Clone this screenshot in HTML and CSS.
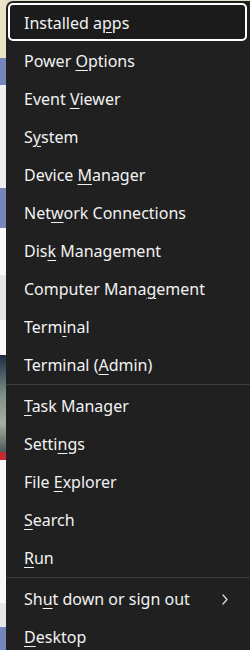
FILE: index.html
```html
<!DOCTYPE html>
<html lang="en">
<head>
    <meta charset="UTF-8">
    <meta name="viewport" content="width=device-width, initial-scale=1.0">
    <title>Quick Link Menu</title>
    <link rel="stylesheet" href="styles.css">
</head>
<body>
    <!-- bit of the desktop that shows left of the menu -->
    <div class="desktop">
        <div class="seg beige"></div>
        <div class="seg blue h27"></div>
        <div class="seg light h103"></div>
        <div class="seg blue h40"></div>
        <div class="seg white h47"></div>
        <div class="seg grey h45"></div>
        <div class="seg white h35"></div>
        <div class="seg photo h97"></div>
        <div class="seg red h8"></div>
        <div class="seg white h143"></div>
        <div class="seg grey h24"></div>
        <div class="seg blue h23"></div>
    </div>

    <div class="menu">
        <div class="item focused"><span>Installed a<u>p</u>ps</span></div>
        <div class="item"><span>Power <u>O</u>ptions</span></div>
        <div class="item"><span>Event <u>V</u>iewer</span></div>
        <div class="item"><span>S<u>y</u>stem</span></div>
        <div class="item"><span>Device <u>M</u>anager</span></div>
        <div class="item"><span>Net<u>w</u>ork Connections</span></div>
        <div class="item"><span>Dis<u>k</u> Management</span></div>
        <div class="item"><span>Computer Mana<u>g</u>ement</span></div>
        <div class="item"><span>Term<u>i</u>nal</span></div>
        <div class="item"><span>Terminal (<u>A</u>dmin)</span></div>
        <div class="separator"></div>
        <div class="item"><span><u>T</u>ask Manager</span></div>
        <div class="item"><span>Setti<u>n</u>gs</span></div>
        <div class="item"><span>File <u>E</u>xplorer</span></div>
        <div class="item"><span><u>S</u>earch</span></div>
        <div class="item"><span><u>R</u>un</span></div>
        <div class="separator"></div>
        <div class="item has-sub">
            <span>Sh<u>u</u>t down or sign out</span>
            <svg class="chevron" width="6" height="11" viewBox="0 0 6 11">
                <path d="M1 1 L5 5.5 L1 10" fill="none" stroke="#d8d8d8" stroke-width="1.3" stroke-linecap="round" stroke-linejoin="round"/>
            </svg>
        </div>
        <div class="item"><span><u>D</u>esktop</span></div>
    </div>
</body>
</html>
```

FILE: styles.css
```css
html, body {
    margin: 0;
    height: 650px;
    overflow: hidden;
}
body {
    display: flex;
    background-color: #e4ddc8;
    font-family: "Noto Sans", "Open Sans", sans-serif;
}
.desktop {
    width: 6px;
    display: flex;
    flex-direction: column;
}
.seg { flex: none; }
.beige { height: 58px; background-color: #ece2c4; }
.blue { background-color: #7686bd; }
.light { background-color: #eeeef2; }
.white { background-color: #f8f8f8; }
.grey { background-color: #e6e6e8; }
.photo { background: linear-gradient(#1e2a44, #7d8f86 40%, #a8b0a0 70%, #4d5b58); }
.red { background-color: #c62a30; }
.h8 { height: 8px; }
.h23 { height: 23px; }
.h24 { height: 24px; }
.h27 { height: 27px; }
.h35 { height: 35px; }
.h40 { height: 40px; }
.h45 { height: 45px; }
.h47 { height: 47px; }
.h97 { height: 97px; }
.h103 { height: 103px; }
.h143 { height: 143px; }

.menu {
    flex: 1;
    margin-top: 1px;
    padding-top: 2px;
    background-color: #202020;
    border-top-left-radius: 7px;
    color: #f2f2f2;
    font-size: 16px;
}
.item {
    box-sizing: border-box;
    height: 38px;
    margin: 0 3px 0 2px;
    padding: 2px 16px 0 14px;
    border: 2px solid transparent;
    border-radius: 5px;
    display: flex;
    align-items: center;
    white-space: nowrap;
}
.item u {
    text-decoration-thickness: 1px;
    text-underline-offset: 3px;
}
.focused {
    border-color: #ffffff;
    background-color: #1b1b1b;
}
.has-sub {
    justify-content: space-between;
}
.chevron {
    margin-right: 1px;
}
.separator {
    height: 1px;
    margin: 1px 0;
    background-color: #3d3d3d;
}
```
